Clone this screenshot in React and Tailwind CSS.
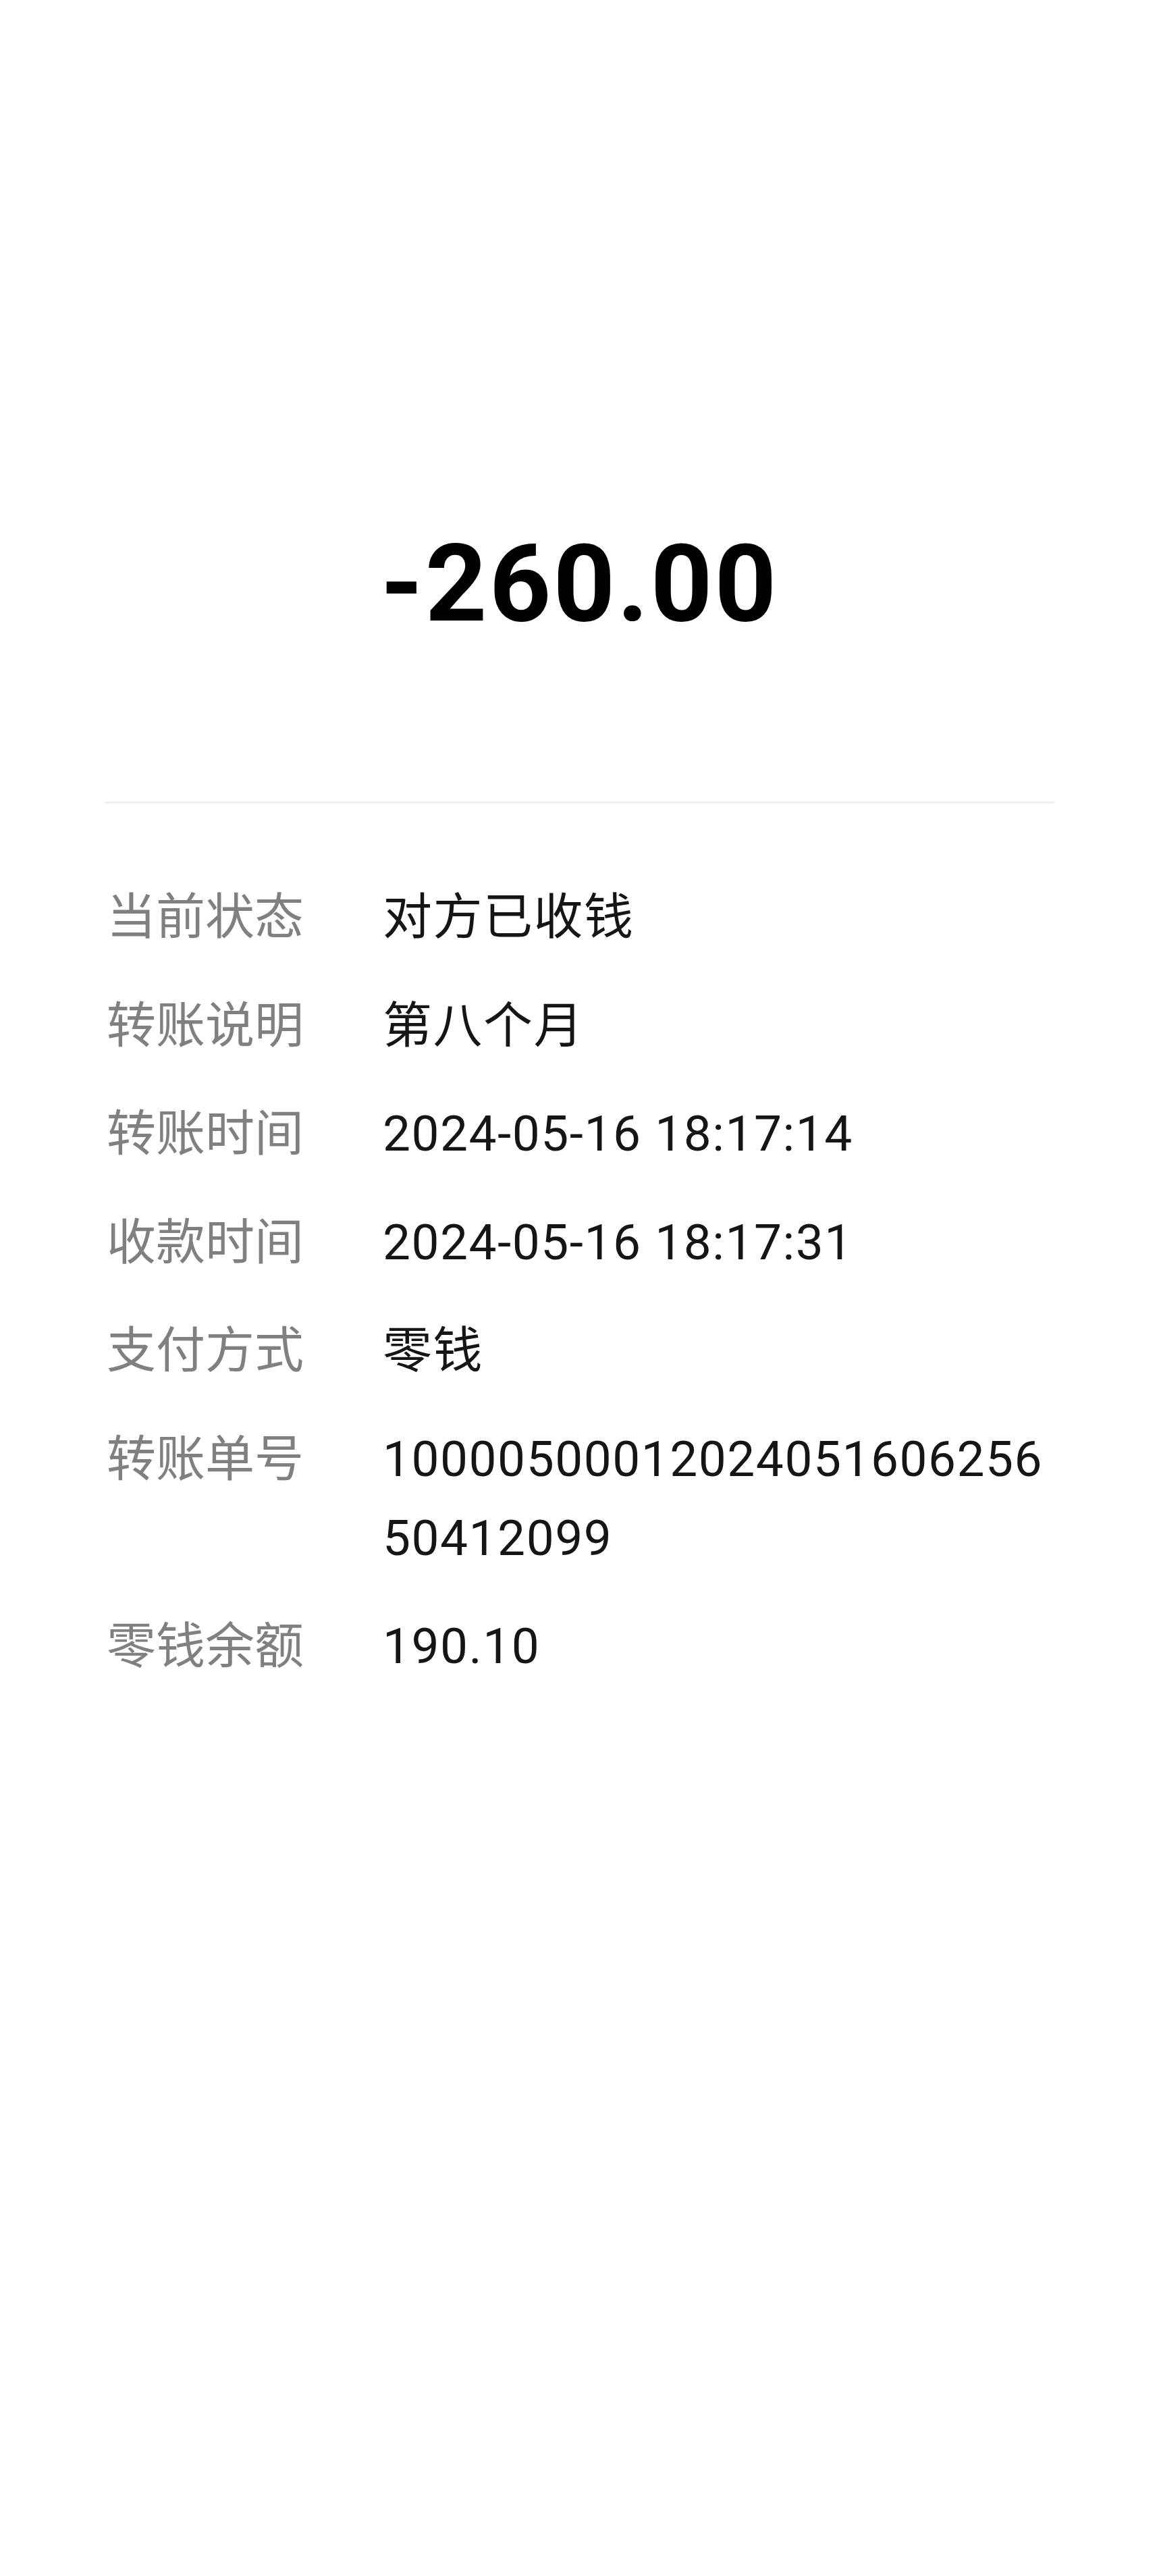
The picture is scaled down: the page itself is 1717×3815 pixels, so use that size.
const rows = [
  { label: '当前状态', value: '对方已收钱' },
  { label: '转账说明', value: '第八个月' },
  { label: '转账时间', value: '2024-05-16 18:17:14' },
  { label: '收款时间', value: '2024-05-16 18:17:31' },
  { label: '支付方式', value: '零钱' },
  { label: '转账单号', value: '1000050001202405160625650412099' },
  { label: '零钱余额', value: '190.10' },
];

export default function App() {
  return (
    <div
      className="min-h-[3815px] w-full bg-white"
      style={{ fontFamily: 'Roboto, "Noto Sans CJK SC", sans-serif' }}
    >
      <div className="px-[155px] pt-[765px]">
        <div className="text-center text-[160px] font-bold leading-[200px] text-black tracking-[3px]">
          -260.00
        </div>
        <div className="mt-[222px] h-[3px] bg-[#f0f0f0]" />
        <div className="mt-[110px] flex flex-col gap-[43.5px]">
          {rows.map((r) => (
            <div key={r.label} className="flex text-[73px] leading-[117px]">
              <div className="w-[412px] shrink-0 pl-[3px] text-[#808080]">{r.label}</div>
              <div className="w-[1000px] break-all tracking-[1.5px] text-[#151515]">{r.value}</div>
            </div>
          ))}
        </div>
      </div>
    </div>
  );
}
